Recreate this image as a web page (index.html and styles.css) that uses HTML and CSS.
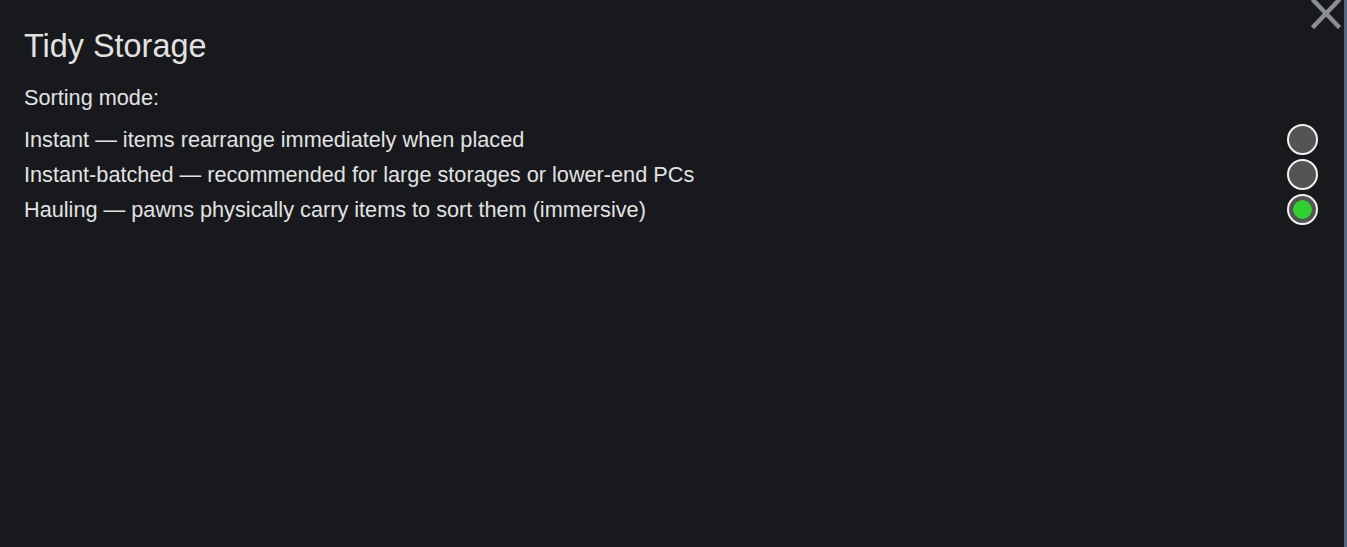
FILE: index.html
```html
<!DOCTYPE html>
<html>
<head>
<meta charset="utf-8">
<link rel="stylesheet" href="styles.css">
</head>
<body>
<div class="window">
  <button class="close" aria-label="Close">
    <svg width="30" height="30" viewBox="0 0 30 30"><path d="M3 2 L27 27 M27 2 L3 27" stroke="#8b8e91" stroke-width="4.5" stroke-linecap="square" fill="none"/></svg>
  </button>
  <h1 class="title">Tidy Storage</h1>
  <div class="label">Sorting mode:</div>
  <div class="options">
    <div class="option"><span>Instant — items rearrange immediately when placed</span><span class="radio"></span></div>
    <div class="option"><span>Instant-batched — recommended for large storages or lower-end PCs</span><span class="radio"></span></div>
    <div class="option"><span>Hauling — pawns physically carry items to sort them (immersive)</span><span class="radio on"></span></div>
  </div>
</div>
</body>
</html>
```
FILE: styles.css
```css
html, body {
  margin: 0;
  padding: 0;
  height: 100%;
}
body {
  background: #17191c;
  font-family: "Liberation Sans", Arial, sans-serif;
  color: #e2e2e2;
  overflow: hidden;
}
.window {
  position: relative;
  height: 547px;
  box-sizing: border-box;
  border-right: 3px solid #56667c;
  padding: 28px 26px 0 24px;
}
.close {
  position: absolute;
  top: -1px;
  right: 3px;
  width: 30px;
  height: 30px;
  padding: 0;
  border: 0;
  background: none;
}
.close svg { display: block; }
.title {
  margin: 0;
  font-weight: normal;
  font-size: 32.4px;
  line-height: 36px;
}
.label {
  margin-top: 19px;
  font-size: 21.7px;
  line-height: 30px;
}
.options {
  margin-top: 9px;
  display: flex;
  flex-direction: column;
}
.option {
  display: flex;
  justify-content: space-between;
  align-items: center;
  height: 35px;
  font-size: 21.7px;
}
.radio {
  width: 27px;
  height: 27px;
  border: 2.5px solid #f2f2f2;
  border-radius: 50%;
  background: #545454;
}
.radio.on {
  background: radial-gradient(circle, #2ed12e 0 9px, #545454 9.5px);
}
```
